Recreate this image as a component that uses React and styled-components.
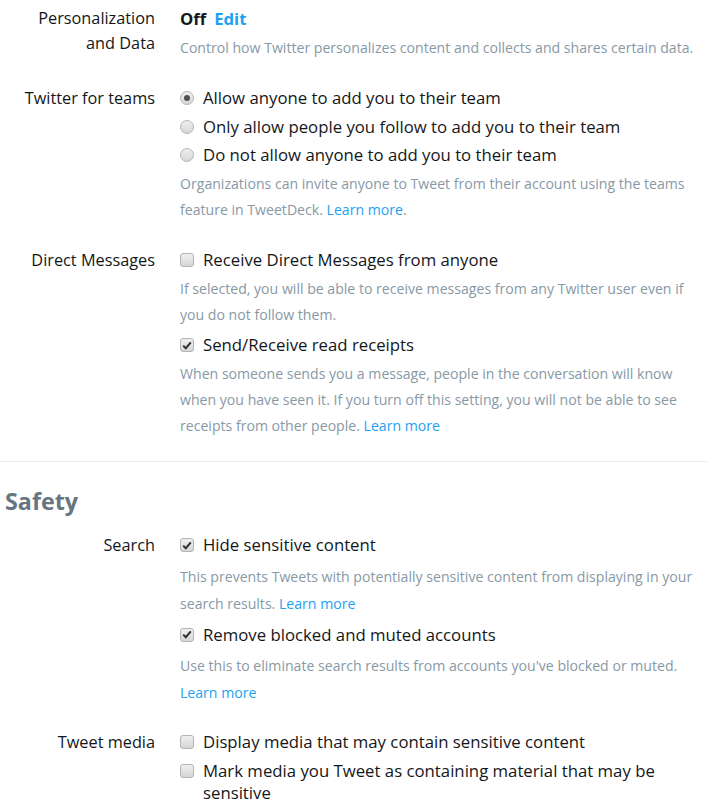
import React from "react";
import styled, { createGlobalStyle } from "styled-components";

const GlobalStyle = createGlobalStyle`
  body {
    margin: 0;
    background: #fff;
    font-family: "Open Sans", "Liberation Sans", sans-serif;
    color: #14171a;
  }
`;

const Page = styled.div`
  width: 707px;
  padding-top: 6px;
`;

const Row = styled.div`
  display: grid;
  grid-template-columns: 155px 1fr;
  column-gap: 25px;
  padding-right: 6px;
  margin-bottom: ${(p) => p.$gap || 20}px;
`;

const Label = styled.div`
  text-align: right;
  font-size: 16.3px;
  line-height: 25px;
  padding-top: ${(p) => (p.$option ? "2px" : "0")};
  color: #14171a;
  white-space: nowrap;
`;

const Content = styled.div`
  display: flex;
  flex-direction: column;
`;

const Status = styled.div`
  font-size: 16.7px;
  line-height: 25px;
  font-weight: 700;
  display: flex;
  gap: 8px;
`;

const EditLink = styled.a`
  color: #1da1f2;
  text-decoration: none;
`;

const Help = styled.p`
  margin: ${(p) => (p.$loose ? "3px 0 4px" : p.$top ? "4px 0 3px" : "1.5px 0 3px")};
  font-size: 14.1px;
  line-height: ${(p) => (p.$loose ? 27 : 26)}px;
  color: #8899a6;
`;

const Link = styled.a`
  color: #1da1f2;
  text-decoration: none;
`;

const Option = styled.label`
  display: flex;
  align-items: flex-start;
  gap: 10px;
  padding: 3.25px 0;
  font-size: 16.75px;
  line-height: 22px;
  color: #14171a;
`;

const Box = styled.span`
  flex: none;
  width: 14px;
  height: 14px;
  margin-top: 4px;
  margin-left: -0.5px;
  margin-right: -0.5px;
  box-sizing: border-box;
  border: 1px solid #b4b4b4;
  border-radius: ${(p) => (p.$round ? "50%" : "3px")};
  background: linear-gradient(#efefef, #d6d6d6);
  display: flex;
  align-items: center;
  justify-content: center;
`;

const Dot = styled.span`
  width: 6px;
  height: 6px;
  border-radius: 50%;
  background: #4f4f4f;
`;

const Divider = styled.hr`
  border: 0;
  border-top: 1px solid #e6ecf0;
  margin: 0;
`;

const SectionTitle = styled.h2`
  margin: 24px 0 15px 5px;
  font-size: 23.3px;
  line-height: 30px;
  font-weight: 700;
  color: #66757f;
`;

const Check = () => (
  <svg width="10" height="9" viewBox="0 0 10 9">
    <path d="M1.2 4.6 L3.8 7.2 L8.8 1.4" fill="none" stroke="#2f2f2f" strokeWidth="2" />
  </svg>
);

const Choice = ({ round, checked, children }) => (
  <Option>
    <Box $round={round}>
      {checked && (round ? <Dot /> : <Check />)}
    </Box>
    <span>{children}</span>
  </Option>
);

export default function App() {
  return (
    <Page>
      <GlobalStyle />
      <Row>
        <Label>
          Personalization
          <br />
          and Data
        </Label>
        <Content>
          <Status>
            <span>Off</span>
            <EditLink href="#">Edit</EditLink>
          </Status>
          <Help $top>
            Control how Twitter personalizes content and collects and shares certain data.
          </Help>
        </Content>
      </Row>

      <Row>
        <Label $option>Twitter for teams</Label>
        <Content>
          <Choice round checked>Allow anyone to add you to their team</Choice>
          <Choice round>Only allow people you follow to add you to their team</Choice>
          <Choice round>Do not allow anyone to add you to their team</Choice>
          <Help>
            Organizations can invite anyone to Tweet from their account using the teams
            feature in TweetDeck. <Link href="#">Learn more</Link>.
          </Help>
        </Content>
      </Row>

      <Row $gap={19}>
        <Label $option>Direct Messages</Label>
        <Content>
          <Choice>Receive Direct Messages from anyone</Choice>
          <Help>
            If selected, you will be able to receive messages from any Twitter user even if
            you do not follow them.
          </Help>
          <Choice checked>Send/Receive read receipts</Choice>
          <Help>
            When someone sends you a message, people in the conversation will know when you
            have seen it. If you turn off this setting, you will not be able to see receipts
            from other people. <Link href="#">Learn more</Link>
          </Help>
        </Content>
      </Row>

      <Divider />
      <SectionTitle>Safety</SectionTitle>

      <Row $gap={18}>
        <Label $option>Search</Label>
        <Content>
          <Choice checked>Hide sensitive content</Choice>
          <Help $loose>
            This prevents Tweets with potentially sensitive content from displaying in your
            search results. <Link href="#">Learn more</Link>
          </Help>
          <Choice checked>Remove blocked and muted accounts</Choice>
          <Help $loose>
            Use this to eliminate search results from accounts you've blocked or muted.{" "}
            <Link href="#">Learn more</Link>
          </Help>
        </Content>
      </Row>

      <Row>
        <Label $option>Tweet media</Label>
        <Content>
          <Choice>Display media that may contain sensitive content</Choice>
          <Choice>Mark media you Tweet as containing material that may be sensitive</Choice>
        </Content>
      </Row>
    </Page>
  );
}
